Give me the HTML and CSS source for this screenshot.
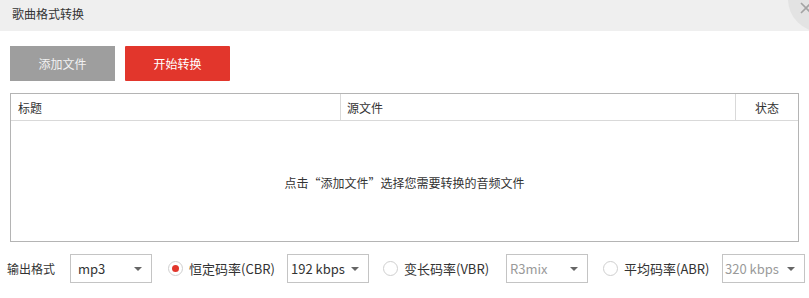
FILE: index.html
```html
<!DOCTYPE html>
<html lang="zh">
<head>
<meta charset="utf-8">
<link rel="stylesheet" href="styles.css">
</head>
<body>
<div class="titlebar">
  <span class="title">歌曲格式转换</span>
  <div class="close-circle"></div>
  <svg class="close-x" width="12" height="12" viewBox="0 0 12 12"><path d="M1 1L11 11M11 1L1 11" stroke="#a3a3a3" stroke-width="1.6" fill="none"/></svg>
</div>
<div class="toolbar">
  <button class="btn btn-gray">添加文件</button>
  <button class="btn btn-red">开始转换</button>
</div>
<div class="table">
  <div class="thead">
    <div class="th th-title">标题</div>
    <div class="th th-src">源文件</div>
    <div class="th th-state">状态</div>
  </div>
  <div class="tbody">
    <span class="empty">点击“添加文件”选择您需要转换的音频文件</span>
  </div>
</div>
<div class="options">
  <span class="label">输出格式</span>
  <div class="select sel-fmt"><span>mp3</span><i class="arrow"></i></div>
  <span class="radio checked r1"></span>
  <span class="rlabel">恒定码率(CBR)</span>
  <div class="select sel-cbr"><span>192 kbps</span><i class="arrow"></i></div>
  <span class="radio r2"></span>
  <span class="rlabel">变长码率(VBR)</span>
  <div class="select sel-vbr disabled"><span>R3mix</span><i class="arrow"></i></div>
  <span class="radio r3"></span>
  <span class="rlabel">平均码率(ABR)</span>
  <div class="select sel-abr disabled"><span>320 kbps</span><i class="arrow"></i></div>
</div>
</body>
</html>
```
FILE: styles.css
```css
* { box-sizing: border-box; }
html, body { margin: 0; padding: 0; }
body {
  width: 809px;
  height: 298px;
  overflow: hidden;
  background: #fff;
  font-family: "Noto Sans CJK SC", "Noto Sans", sans-serif;
  color: #333;
  font-size: 12px;
}
.titlebar {
  position: relative;
  height: 31px;
  background: #efefef;
  padding-left: 12px;
  display: flex;
  align-items: center;
  overflow: hidden;
}
.title { font-size: 12px; color: #333; line-height: 1; margin-top: -3px; }
.close-circle {
  position: absolute;
  left: 788px;
  top: -34px;
  width: 66px;
  height: 66px;
  border-radius: 50%;
  background: #e3e3e3;
}
.close-x { position: absolute; left: 800px; top: 2px; }
.toolbar {
  display: flex;
  gap: 10px;
  padding: 15px 10px 0 10px;
}
.btn {
  width: 105px;
  height: 35px;
  border: none;
  font-family: inherit;
  font-size: 12px;
  padding: 0;
  color: #fff;
}
.btn-gray { background: #9e9e9e; color: #f2f2f2; }
.btn-red { background: #e2362c; border-radius: 1px; }
.table {
  margin: 12px 10px 0 10px;
  height: 149px;
  border: 1px solid #b4b4b4;
  display: flex;
  flex-direction: column;
}
.thead {
  height: 27px;
  display: flex;
  border-bottom: 1px solid #d9d9d9;
}
.th {
  display: flex;
  align-items: center;
  font-size: 12px;
  color: #333;
}
.th-title { width: 330px; padding-left: 7px; border-right: 1px solid #d9d9d9; }
.th-src { width: 395px; padding-left: 6px; border-right: 1px solid #d9d9d9; }
.th-state { flex: 1; justify-content: center; }
.tbody {
  flex: 1;
  display: flex;
  align-items: center;
  justify-content: center;
  padding-top: 2px;
}
.empty { font-size: 12px; color: #333; }
.options {
  display: flex;
  align-items: center;
  margin-top: 12px;
  padding-left: 7px;
  height: 29px;
  white-space: nowrap;
}
.options > * { flex-shrink: 0; }
.label { font-size: 12px; color: #333; width: 63px; }
.select {
  position: relative;
  width: 82px;
  height: 29px;
  border: 1px solid #c4c4c4;
  display: flex;
  align-items: center;
  font-size: 13px;
  color: #333;
  padding-left: 3px;
}
.select.disabled { color: #9a9a9a; }
.sel-fmt { padding-left: 7px; }
.sel-abr { padding-left: 2px; width: 83px; }
.arrow {
  position: absolute;
  right: 9px;
  top: 12px;
  width: 0;
  height: 0;
  border-left: 4px solid transparent;
  border-right: 4px solid transparent;
  border-top: 4px solid #666;
}
.radio {
  width: 15px;
  height: 15px;
  border-radius: 50%;
  border: 1px solid #cfcfcf;
  position: relative;
  background: #fff;
}
.radio.checked::after {
  content: "";
  position: absolute;
  left: 3px;
  top: 3px;
  width: 7px;
  height: 7px;
  border-radius: 50%;
  background: #e2362c;
}
.r1 { margin-left: 16px; }
.r2 { margin-left: 14px; }
.r3 { margin-left: 15px; }
.rlabel { font-size: 13px; color: #333; margin-left: 6px; width: 82px; }
.sel-cbr { margin-left: 16px; }
.sel-vbr { margin-left: 20px; }
.sel-abr { margin-left: 16px; }
```
